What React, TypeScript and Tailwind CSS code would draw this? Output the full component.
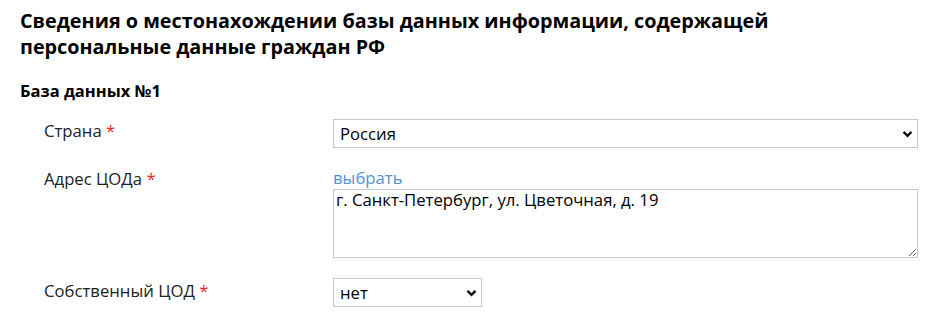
import React from "react";

function Chevron() {
  return (
    <svg
      className="pointer-events-none absolute right-[5px] top-1/2 h-[11px] w-[11px] -translate-y-1/2"
      viewBox="0 0 10 10"
    >
      <path d="M1.4 3.1 L5 6.7 L8.6 3.1" fill="none" stroke="#111" strokeWidth="2.2" />
    </svg>
  );
}

function Label({ text }: { text: string }) {
  return (
    <div className="text-[16.7px] leading-[22px] text-[#222]">
      {text} <span className="text-[#ee1c1c]">*</span>
    </div>
  );
}

export default function App() {
  return (
    <div className="min-h-[324px] bg-white pl-5 pt-[8px] text-black [font-family:'Open_Sans',sans-serif]">
      {/* HEADER */}
      <h1 className="w-[800px] text-[19.8px] font-bold leading-[26px]">
        Сведения о местонахождении базы данных информации, содержащей персональные данные граждан РФ
      </h1>
      <h2 className="mt-[21px] text-[16.5px] font-bold leading-[20px]">База данных №1</h2>

      {/* FORM */}
      <div className="mt-[18px] grid grid-cols-[289px_585px] gap-y-[20px] pl-6">
        <div className="pt-[1px]">
          <Label text="Страна" />
        </div>
        <div className="relative h-[29px]">
          <select
            defaultValue="ru"
            className="h-full w-full appearance-none border border-[#c8c8c8] bg-white pl-[6px] text-[16.7px] text-black outline-none"
          >
            <option value="ru">Россия</option>
          </select>
          <Chevron />
        </div>

        <div>
          <Label text="Адрес ЦОДа" />
        </div>
        <div>
          <a className="block text-[16.7px] leading-[20px] text-[#4f95d6]" href="#">
            выбрать
          </a>
          <textarea
            defaultValue="г. Санкт-Петербург, ул. Цветочная, д. 19"
            className="mt-[1px] block h-[69px] w-full border border-[#c8c8c8] px-[2px] py-0 text-[16.7px] leading-[20px] text-black outline-none"
          />
        </div>

        <div className="pt-[2px]">
          <Label text="Собственный ЦОД" />
        </div>
        <div className="relative h-[29px] w-[149px]">
          <select
            defaultValue="no"
            className="h-full w-full appearance-none border border-[#c8c8c8] bg-white pl-[6px] text-[16.7px] text-black outline-none"
          >
            <option value="no">нет</option>
          </select>
          <Chevron />
        </div>
      </div>
    </div>
  );
}
